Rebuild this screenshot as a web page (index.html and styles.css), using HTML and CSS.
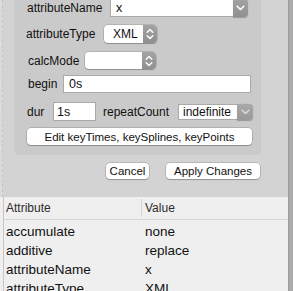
FILE: index.html
```html
<!DOCTYPE html>
<html>
<head>
<meta charset="utf-8">
<link rel="stylesheet" href="styles.css">
</head>
<body>
<div class="app">
  <div class="content">
    <div class="top">
      <div class="strip"></div>
      <div class="panel">
        <div class="box">
          <div class="row r1">
            <span class="lbl l1">attributeName</span>
            <div class="combo c-name">
              <span class="field">x</span>
              <span class="cbtn"><svg width="9" height="6" viewBox="0 0 9 6"><polyline points="1.2,1.2 4.5,4.5 7.8,1.2" fill="none" stroke="#fff" stroke-width="1.6" stroke-linecap="round" stroke-linejoin="round"/></svg></span>
            </div>
          </div>
          <div class="row r2">
            <span class="lbl l2">attributeType</span>
            <div class="popup p-type">
              <span class="ptext">XML</span>
              <span class="stepper"><svg width="8" height="12" viewBox="0 0 8 12"><polyline points="1.2,4.3 4,1.5 6.8,4.3" fill="none" stroke="#fff" stroke-width="1.4" stroke-linecap="round" stroke-linejoin="round"/><polyline points="1.2,7.7 4,10.5 6.8,7.7" fill="none" stroke="#fff" stroke-width="1.4" stroke-linecap="round" stroke-linejoin="round"/></svg></span>
            </div>
          </div>
          <div class="row r3">
            <span class="lbl l3">calcMode</span>
            <div class="popup p-calc">
              <span class="ptext"></span>
              <span class="stepper"><svg width="8" height="12" viewBox="0 0 8 12"><polyline points="1.2,4.3 4,1.5 6.8,4.3" fill="none" stroke="#fff" stroke-width="1.4" stroke-linecap="round" stroke-linejoin="round"/><polyline points="1.2,7.7 4,10.5 6.8,7.7" fill="none" stroke="#fff" stroke-width="1.4" stroke-linecap="round" stroke-linejoin="round"/></svg></span>
            </div>
          </div>
          <div class="row r4">
            <span class="lbl l4">begin</span>
            <span class="input i-begin">0s</span>
          </div>
          <div class="row r5">
            <span class="lbl l5">dur</span>
            <span class="input i-dur">1s</span>
            <span class="lbl l6">repeatCount</span>
            <div class="combo c-rep">
              <span class="field">indefinite</span>
              <span class="cbtn light"><svg width="9" height="6" viewBox="0 0 9 6"><polyline points="1.2,1.2 4.5,4.5 7.8,1.2" fill="none" stroke="#d8d8d8" stroke-width="1.6" stroke-linecap="round" stroke-linejoin="round"/></svg></span>
            </div>
          </div>
          <div class="row r6">
            <span class="btn b-edit">Edit keyTimes, keySplines, keyPoints</span>
          </div>
        </div>
        <div class="actions">
          <span class="btn b-cancel">Cancel</span>
          <span class="btn b-apply">Apply Changes</span>
        </div>
      </div>
    </div>
    <div class="table">
      <div class="thead">
        <span class="col1">Attribute</span>
        <span class="col2">Value</span>
      </div>
      <div class="tbody">
        <div class="tr"><span class="col1">accumulate</span><span class="col2">none</span></div>
        <div class="tr"><span class="col1">additive</span><span class="col2">replace</span></div>
        <div class="tr"><span class="col1">attributeName</span><span class="col2">x</span></div>
        <div class="tr"><span class="col1">attributeType</span><span class="col2">XML</span></div>
      </div>
    </div>
  </div>
  <div class="edge"></div>
</div>
</body>
</html>
```

FILE: styles.css
```css
html, body {
  margin: 0;
  padding: 0;
  background: #efefef;
  overflow: hidden;
}
body {
  font-family: "Liberation Sans", Arial, sans-serif;
  font-size: 12px;
  color: #111;
}
.app {
  display: flex;
  width: 293px;
  height: 291px;
  overflow: hidden;
}
.content {
  width: 288px;
  display: flex;
  flex-direction: column;
}
.edge {
  width: 5px;
  background: #ababab;
  border-left: 1px solid #9c9c9c;
  box-sizing: border-box;
}
.top {
  height: 197px;
  flex: 0 0 auto;
  display: flex;
  background: #d3d3d3;
}
.strip {
  width: 3px;
  background: #dadada;
  border-right: 1px dashed #c4c4c4;
  box-sizing: border-box;
}
.panel {
  flex: 1;
  display: flex;
  flex-direction: column;
}
.box {
  margin: -6px 27px 0 11px;
  padding: 5px 0 10px 13px;
  background: #cacaca;
  border-radius: 0 0 5px 5px;
  display: flex;
  flex-direction: column;
}
.row {
  display: flex;
  align-items: center;
}
.r1 { height: 18px; }
.r2 { height: 18px; margin-top: 8px; margin-left: -1px; }
.r3 { height: 17px; margin-top: 9px; margin-left: 1px; }
.r4 { height: 18px; margin-top: 6px; margin-left: 1px; }
.r5 { height: 19px; margin-top: 9px; }
.r6 { height: 17px; margin-top: 7px; }
.lbl {
  flex: 0 0 auto;
  white-space: nowrap;
  line-height: 14px;
}
.l1 { width: 83px; }
.l2 { width: 78px; }
.l3 { width: 57px; }
.l4 { width: 35px; }
.l5 { width: 26px; }
.l6 { width: 75px; margin-left: 7px; }

.combo {
  display: flex;
  height: 100%;
}
.combo .field {
  flex: 1;
  background: #fff;
  border: 1px solid #a9a9a9;
  border-right: none;
  box-sizing: border-box;
  padding-left: 5px;
  line-height: 16px;
  font-size: 12.5px;
  white-space: nowrap;
  overflow: hidden;
}
.cbtn {
  width: 15px;
  background: linear-gradient(#a3a3a3, #8f8f8f);
  border-radius: 0 4px 4px 0;
  display: flex;
  align-items: center;
  justify-content: center;
  box-shadow: 0 0.5px 1px rgba(0,0,0,0.25);
}
.cbtn.light {
  background: linear-gradient(#a9a9a9, #989898);
  width: 16px;
}
.c-name { width: 138px; }
.c-rep { width: 75px; height: 16px; }
.c-rep .field { line-height: 14px; padding-left: 4px; font-size: 12px; }

.popup {
  display: flex;
  height: 100%;
  background: #fff;
  border-radius: 4px;
  box-shadow: 0 0 0 0.5px rgba(0,0,0,0.22), 0 1px 1px rgba(0,0,0,0.2);
  overflow: hidden;
}
.popup .ptext {
  flex: 1;
  padding-left: 9px;
  line-height: 18px;
  font-size: 12px;
}
.p-calc .ptext { line-height: 17px; }
.stepper {
  width: 14px;
  background: linear-gradient(#a3a3a3, #8f8f8f);
  display: flex;
  align-items: center;
  justify-content: center;
}
.p-type { width: 53px; }
.p-calc { width: 71px; }

.input {
  height: 100%;
  box-sizing: border-box;
  background: #fff;
  border: 1px solid #a9a9a9;
  padding-left: 5px;
  font-size: 12.5px;
  display: flex;
  align-items: center;
}
.i-begin { width: 188px; }
.i-dur { width: 43px; padding-left: 3px; }

.btn {
  display: flex;
  align-items: center;
  justify-content: center;
  background: #fff;
  border-radius: 4px;
  box-shadow: 0 0 0 0.5px rgba(0,0,0,0.25), 0 1px 1px rgba(0,0,0,0.2);
  height: 100%;
  font-size: 11.5px;
  white-space: nowrap;
}
.b-edit { width: 225px; }
.actions {
  display: flex;
  justify-content: flex-end;
  gap: 17px;
  margin-top: 8px;
  padding-right: 28px;
  height: 16px;
}
.b-cancel { width: 43px; }
.b-apply { width: 94px; }

.table {
  flex: 1;
  background: #efefef;
  padding-left: 3px;
}
.thead, .tbody {
  border-left: 1px solid #c6c6c6;
}
.thead {
  height: 22px;
  border-bottom: 1px solid #d6d6d6;
  display: flex;
  align-items: center;
  font-size: 12px;
  color: #2c2c2c;
}
.col1 {
  width: 137px;
  padding-left: 2px;
  box-sizing: border-box;
  flex: 0 0 auto;
}
.col2 {
  padding-left: 4px;
}
.thead .col2 {
  border-left: 1px solid #d4d4d4;
  padding-left: 3px;
  line-height: 18px;
}
.tbody {
  padding-top: 2px;
  height: 100%;
}
.tr {
  display: flex;
  height: 19px;
  align-items: center;
  font-size: 13.5px;
  color: #111;
}
```
